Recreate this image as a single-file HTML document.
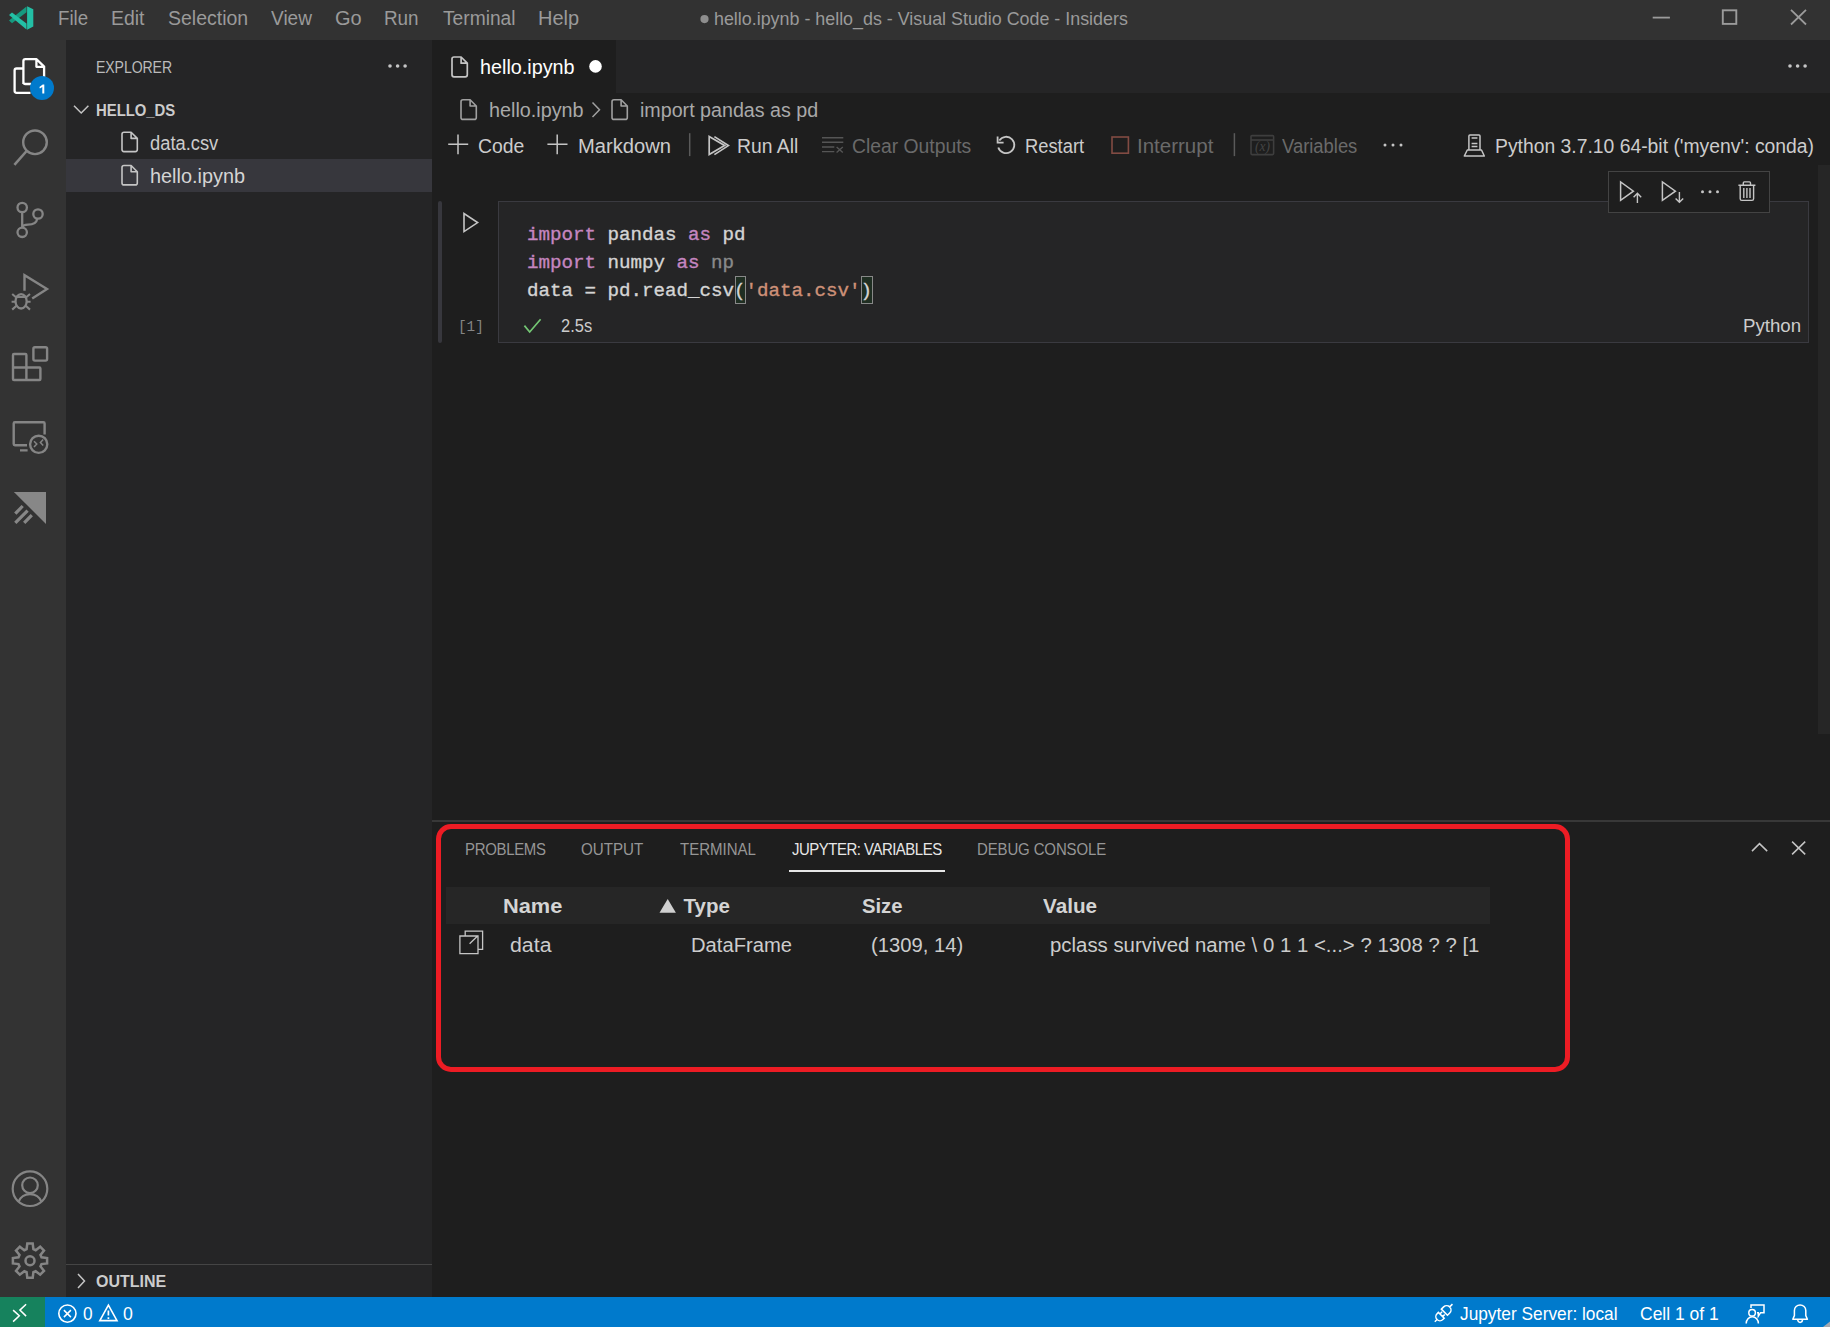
<!DOCTYPE html>
<html><head><meta charset="utf-8"><title>hello.ipynb - hello_ds - Visual Studio Code - Insiders</title>
<style>
html,body{margin:0;padding:0;width:1830px;height:1327px;overflow:hidden;background:#1e1e1e;font-family:"Liberation Sans",sans-serif;}
.a{position:absolute;}
.t{position:absolute;white-space:pre;line-height:1em;transform-origin:0 0;}
svg{position:absolute;overflow:visible;}

</style></head>
<body>
<!-- backgrounds -->
<div class="a" style="left:0;top:0;width:1830px;height:40px;background:#323232"></div>
<div class="a" style="left:0;top:40px;width:66px;height:1257px;background:#333333"></div>
<div class="a" style="left:66px;top:40px;width:366px;height:1257px;background:#252526"></div>
<div class="a" style="left:432px;top:40px;width:1398px;height:53px;background:#252526"></div>
<div class="a" style="left:432px;top:40px;width:184px;height:53px;background:#1e1e1e"></div>
<div class="a" style="left:66px;top:159px;width:366px;height:33px;background:#37373d"></div>
<div class="a" style="left:66px;top:1264px;width:366px;height:1px;background:#454545"></div>
<!-- status bar -->
<div class="a" style="left:0;top:1297px;width:1830px;height:30px;background:#007acc"></div>
<div class="a" style="left:0;top:1297px;width:45px;height:30px;background:#16825d"></div>
<!-- editor scrollbar slider -->
<div class="a" style="left:1818px;top:165px;width:12px;height:569px;background:#262626"></div>
<!-- notebook cell -->
<div class="a" style="left:438px;top:201px;width:4px;height:142px;background:#37373d;border-radius:2px"></div>
<div class="a" style="left:498px;top:201px;width:1309px;height:140px;background:#252526;border:1px solid #3a3a40"></div>
<!-- bracket match boxes -->
<div class="a" style="left:735px;top:276px;width:9px;height:26px;border:1px solid #888;background:#1f2e22"></div>
<div class="a" style="left:861px;top:276px;width:10px;height:26px;border:1px solid #888;background:#1f2e22"></div>
<!-- cell toolbar -->
<div class="a" style="left:1608px;top:171px;width:160px;height:40px;background:#1e1e1e;border:1px solid #434343"></div>
<!-- panel -->
<div class="a" style="left:432px;top:820px;width:1398px;height:2px;background:#383838"></div>
<div class="a" style="left:789px;top:870.4px;width:156.2px;height:1.7px;background:#e7e7e7"></div>
<div class="a" style="left:446px;top:887px;width:1044px;height:37px;background:#262626"></div>
<div class="a" style="left:436px;top:824px;width:1124px;height:238px;border:5px solid #ed1c24;border-radius:15px"></div>

<svg class="a" style="left:0;top:0" width="1830" height="1327" viewBox="0 0 1830 1327" stroke-linecap="butt">
<polygon points="27.1,6.2 33.3,9.2 33.3,26.6 27.1,29.7" fill="#23bfa5"/>
<polygon points="26.5,6.5 26.5,12.3 12,23.2 9,20.6" fill="#16997f"/>
<polygon points="9,15 12,12.4 26.5,23.5 26.5,29.5" fill="#23bfa5"/>
<line x1="1652.7" y1="17.6" x2="1669.9" y2="17.6" stroke="#9b9b9b" stroke-width="1.8" />
<rect x="1722.8" y="10.3" width="13.5" height="13.6" rx="0" fill="none" stroke="#9b9b9b" stroke-width="1.9"/>
<path d="M1791,9.9 L1806,24.5 M1806,9.9 L1791,24.5" fill="none" stroke="#9b9b9b" stroke-width="1.8" />
<circle cx="704.5" cy="19.1" r="4.1" fill="#8e8e8e" stroke="none" stroke-width="0"/>
<path d="M23.4,68.5 H16.6 Q14.6,68.5 14.6,70.5 V90.8 Q14.6,92.8 16.6,92.8 H30.5" fill="none" stroke="#ffffff" stroke-width="2.3" />
<path d="M23.4,84 V61 Q23.4,59.2 25.4,59.2 H36.6 L44.1,66.6 V78 M36.4,59.4 V66.8 H44 M23.4,82 Q23.4,84 25.4,84 H31" fill="none" stroke="#ffffff" stroke-width="2.3" stroke-linejoin="round"/>
<circle cx="42" cy="87.9" r="12" fill="#007acc" stroke="none" stroke-width="0"/>
<polygon points="42.7,84.5 44.3,84.5 44.3,93.6 42.3,93.6 42.3,87 39.9,88.5 39.4,86.9" fill="#fff"/>
<circle cx="35" cy="142.3" r="11.8" fill="none" stroke="#858585" stroke-width="2.4"/>
<line x1="26.6" y1="151" x2="14.4" y2="164.8" stroke="#858585" stroke-width="2.6" />
<circle cx="22.2" cy="207.5" r="4.7" fill="none" stroke="#858585" stroke-width="2.3"/>
<circle cx="38" cy="214" r="4.7" fill="none" stroke="#858585" stroke-width="2.3"/>
<circle cx="22.2" cy="232.3" r="4.7" fill="none" stroke="#858585" stroke-width="2.3"/>
<path d="M22.2,212.4 V227.5 M37.2,218.8 C36.5,223.5 32,224.6 28,224.6 C25,224.6 22.6,225.6 22.3,227.6" fill="none" stroke="#858585" stroke-width="2.3" />
<path d="M24.5,290.8 V275.2 L47,289 L32.2,298.5" fill="none" stroke="#858585" stroke-width="2.4" stroke-linejoin="miter"/>
<ellipse cx="21.1" cy="301.3" rx="5.6" ry="7.2" fill="none" stroke="#858585" stroke-width="2.3"/>
<path d="M15.8,297 H26.4 M12.2,294 L16,297.2 M30,294 L26.2,297.2 M11.6,301.8 H15.5 M26.7,301.8 H30.6 M12.2,309.6 L16.4,305.8 M30,309.6 L25.8,305.8" fill="none" stroke="#858585" stroke-width="2.1" />
<rect x="33.4" y="347.2" width="13.7" height="13.4" rx="1.5" fill="none" stroke="#858585" stroke-width="2.4"/>
<path d="M26.4,367.5 V355 Q26.4,354 25.4,354 H14 Q13,354 13,355 V379 Q13,380 14,380 H39.4 Q40.4,380 40.4,379 V368.5 Q40.4,367.5 39.4,367.5 H13 M26.4,367.5 V380" fill="none" stroke="#858585" stroke-width="2.4" />
<path d="M27,445.2 H14.9 Q13.7,445.2 13.7,444 V423.5 Q13.7,422.3 14.9,422.3 H43.4 Q44.6,422.3 44.6,423.5 V434.5 M20,450.4 H27.6" fill="none" stroke="#858585" stroke-width="2.4" />
<circle cx="38.7" cy="444.3" r="8.6" fill="none" stroke="#858585" stroke-width="2.4"/>
<path d="M34,441.2 L36.8,444 L34,447 M43.2,439.6 L40.4,442.5 L43.2,445.4" fill="none" stroke="#858585" stroke-width="1.5" />
<polygon points="13.9,492 46,492 46,523.9" fill="#878787"/>
<path d="M22.7,506 L15.3,513.7 M27.6,510.7 L15.3,522.8 M31.8,515.1 L24.2,522.8" fill="none" stroke="#878787" stroke-width="3.2" />
<circle cx="30" cy="1188.7" r="17.3" fill="none" stroke="#858585" stroke-width="2.2"/>
<circle cx="30" cy="1185.3" r="7.8" fill="none" stroke="#858585" stroke-width="2.2"/>
<path d="M18.6,1201.6 A12,11 0 0 1 41.4,1201.6" fill="none" stroke="#858585" stroke-width="2.2" />
<path d="M26.6,1249.2 L27.3,1243.6 L32.7,1243.6 L33.4,1249.2 L35.7,1250.2 L40.2,1246.7 L44.0,1250.5 L40.5,1255.0 L41.5,1257.3 L47.1,1258.0 L47.1,1263.4 L41.5,1264.1 L40.5,1266.4 L44.0,1270.9 L40.2,1274.7 L35.7,1271.2 L33.4,1272.2 L32.7,1277.8 L27.3,1277.8 L26.6,1272.2 L24.3,1271.2 L19.8,1274.7 L16.0,1270.9 L19.5,1266.4 L18.5,1264.1 L12.9,1263.4 L12.9,1258.0 L18.5,1257.3 L19.5,1255.0 L16.0,1250.5 L19.8,1246.7 L24.3,1250.2 Z" fill="none" stroke="#858585" stroke-width="2.5" stroke-linejoin="miter"/>
<circle cx="30" cy="1260.7" r="4.5" fill="none" stroke="#858585" stroke-width="2.5"/>
<circle cx="390" cy="66" r="1.8" fill="#c5c5c5" stroke="none" stroke-width="0"/>
<circle cx="397.6" cy="66" r="1.8" fill="#c5c5c5" stroke="none" stroke-width="0"/>
<circle cx="405.1" cy="66" r="1.8" fill="#c5c5c5" stroke="none" stroke-width="0"/>
<path d="M74,105.8 L81.2,113 L88.4,105.8" fill="none" stroke="#c5c5c5" stroke-width="1.5" />
<path d="M78,1274 L84.5,1281 L78,1288" fill="none" stroke="#c5c5c5" stroke-width="1.5" />
<path d="M124,132.2 H131.10000000000002 L137.3,138.39999999999998 V149.6 Q137.3,151.6 135.3,151.6 H124 Q122,151.6 122,149.6 V134.2 Q122,132.2 124,132.2 Z M131.10000000000002,132.2 V138.39999999999998 H137.3" fill="none" stroke="#c5c5c5" stroke-width="1.6" stroke-linejoin="round"/>
<path d="M124,165.5 H131.10000000000002 L137.3,171.7 V182.9 Q137.3,184.9 135.3,184.9 H124 Q122,184.9 122,182.9 V167.5 Q122,165.5 124,165.5 Z M131.10000000000002,165.5 V171.7 H137.3" fill="none" stroke="#c5c5c5" stroke-width="1.6" stroke-linejoin="round"/>
<path d="M454,57 H461.1 L467.3,63.2 V74.8 Q467.3,76.8 465.3,76.8 H454 Q452,76.8 452,74.8 V59 Q452,57 454,57 Z M461.1,57 V63.2 H467.3" fill="none" stroke="#c5c5c5" stroke-width="1.7" stroke-linejoin="round"/>
<circle cx="595.5" cy="66.4" r="6.3" fill="#ffffff" stroke="none" stroke-width="0"/>
<circle cx="1790" cy="66" r="1.8" fill="#c5c5c5" stroke="none" stroke-width="0"/>
<circle cx="1797.6" cy="66" r="1.8" fill="#c5c5c5" stroke="none" stroke-width="0"/>
<circle cx="1805.1" cy="66" r="1.8" fill="#c5c5c5" stroke="none" stroke-width="0"/>
<path d="M463,99.8 H470.1 L476.3,106.0 V117.4 Q476.3,119.4 474.3,119.4 H463 Q461,119.4 461,117.4 V101.8 Q461,99.8 463,99.8 Z M470.1,99.8 V106.0 H476.3" fill="none" stroke="#a0a0a0" stroke-width="1.6" stroke-linejoin="round"/>
<path d="M592.5,102.5 L599.5,109.8 L592.5,117" fill="none" stroke="#a0a0a0" stroke-width="1.5" />
<path d="M614,99.8 H621.0999999999999 L627.3,106.0 V117.4 Q627.3,119.4 625.3,119.4 H614 Q612,119.4 612,117.4 V101.8 Q612,99.8 614,99.8 Z M621.0999999999999,99.8 V106.0 H627.3" fill="none" stroke="#a0a0a0" stroke-width="1.6" stroke-linejoin="round"/>
<path d="M448.2,144.2 H468.2 M458,134.5 V154.2" fill="none" stroke="#c5c5c5" stroke-width="1.5" />
<path d="M547.4,144.2 H567.5 M557.2,134.5 V154.2" fill="none" stroke="#c5c5c5" stroke-width="1.5" />
<line x1="689.7" y1="133.2" x2="689.7" y2="156.1" stroke="#5a5a5a" stroke-width="1.5" />
<path d="M709.2,136.6 V154.6 L724.6,145.6 Z M714.4,136.6 L728.4,145.6 L714.4,154.6" fill="none" stroke="#c5c5c5" stroke-width="1.7" stroke-linejoin="miter"/>
<path d="M822,137.8 H843.3 M822,142.3 H843.3 M822,147 H834.3 M822,151.6 H834.3 M836.6,147 L842.8,152.6 M842.8,147 L836.6,152.6" fill="none" stroke="#555555" stroke-width="1.4" />
<path d="M999.3,140.4 A8.2,8.2 0 1 1 998.3,147.5" fill="none" stroke="#c5c5c5" stroke-width="1.8" />
<path d="M997.6,136.4 V142.6 H1003.6" fill="none" stroke="#c5c5c5" stroke-width="1.8" />
<rect x="1112" y="137" width="16.4" height="16.2" rx="0" fill="none" stroke="#824b43" stroke-width="1.6"/>
<line x1="1234.4" y1="133.2" x2="1234.4" y2="156.1" stroke="#5a5a5a" stroke-width="1.5" />
<rect x="1251" y="135.6" width="22.6" height="19" rx="1" fill="none" stroke="#3e3e3e" stroke-width="1.6"/>
<line x1="1251" y1="140" x2="1273.6" y2="140" stroke="#3e3e3e" stroke-width="1.6" />
<circle cx="1385" cy="145" r="1.5" fill="#c5c5c5" stroke="none" stroke-width="0"/>
<circle cx="1393" cy="145" r="1.5" fill="#c5c5c5" stroke="none" stroke-width="0"/>
<circle cx="1401" cy="145" r="1.5" fill="#c5c5c5" stroke="none" stroke-width="0"/>
<path d="M1468.9,150 V136 Q1468.9,135 1469.9,135 H1479 Q1480,135 1480,136 V150 M1467.3,150 H1481.5 L1484.3,156 H1464.3 Z M1471.6,138 H1477.4 M1471.6,146.4 H1477.4 M1471.6,143.6 H1477.4" fill="none" stroke="#c5c5c5" stroke-width="1.5" stroke-linejoin="round"/>
<path d="M464,213.6 V231.6 L477.6,222.6 Z" fill="none" stroke="#c5c5c5" stroke-width="1.6" stroke-linejoin="miter"/>
<path d="M524.4,325.6 L529.7,332 L540.6,319.2" fill="none" stroke="#74c774" stroke-width="1.7" />
<path d="M1620.6,182 V200.4 L1633.4,191.2 Z" fill="none" stroke="#c5c5c5" stroke-width="1.5" />
<path d="M1637.4,202.9 V193.4 M1633.6,197.2 L1637.4,193.2 L1641.2,197.2" fill="none" stroke="#c5c5c5" stroke-width="1.4" />
<path d="M1662.4,182 V200.4 L1675.4,191.2 Z" fill="none" stroke="#c5c5c5" stroke-width="1.5" />
<path d="M1679.4,192 V202 M1675.6,198.4 L1679.4,202.3 L1683.2,198.4" fill="none" stroke="#c5c5c5" stroke-width="1.4" />
<circle cx="1702.5" cy="191.8" r="1.5" fill="#c5c5c5" stroke="none" stroke-width="0"/>
<circle cx="1710" cy="191.8" r="1.5" fill="#c5c5c5" stroke="none" stroke-width="0"/>
<circle cx="1717.5" cy="191.8" r="1.5" fill="#c5c5c5" stroke="none" stroke-width="0"/>
<path d="M1738.4,185.2 H1755.4 M1743.3,185 V182.9 Q1743.3,181.9 1744.3,181.9 H1749.5 Q1750.5,181.9 1750.5,182.9 V185 M1740.2,185.4 V198.8 Q1740.2,200.4 1741.8,200.4 H1752 Q1753.6,200.4 1753.6,198.8 V185.4 M1743.8,188 V198 M1746.9,188 V198 M1750,188 V198" fill="none" stroke="#c5c5c5" stroke-width="1.4" />
<path d="M1752,851.1 L1759.5,843.6 L1767.2,851.1" fill="none" stroke="#c5c5c5" stroke-width="1.5" />
<path d="M1792.1,841.6 L1805.2,854.4 M1805.2,841.6 L1792.1,854.4" fill="none" stroke="#c5c5c5" stroke-width="1.5" />
<polygon points="659.5,912.8 667.7,899 675.9,912.8" fill="#d0d0d0"/>
<path d="M459.9,936 H478 V953.6 H459.9 Z M465.2,936 V931.2 H482.6 V949.4 H478 M469.6,943.8 L477.6,936" fill="none" stroke="#c5c5c5" stroke-width="1.3" />
<path d="M13.1,1310.1 L19.3,1315.8 L13.1,1321.6 M26.1,1304.3 L19.9,1310.1 L26.1,1316.1" fill="none" stroke="#ffffff" stroke-width="1.5" />
<circle cx="67.4" cy="1313.6" r="8.6" fill="none" stroke="#ffffff" stroke-width="1.6"/>
<path d="M63.9,1310.1 L70.9,1317.1 M70.9,1310.1 L63.9,1317.1" fill="none" stroke="#ffffff" stroke-width="1.5" />
<path d="M108.4,1305.2 L117,1320.6 H99.8 Z" fill="none" stroke="#ffffff" stroke-width="1.6" stroke-linejoin="miter"/>
<path d="M108.4,1310.6 V1315.6 M108.4,1317.2 V1318.9" fill="none" stroke="#ffffff" stroke-width="1.7" />
<g transform="translate(1443.7,1312.9) rotate(-45)" fill="none" stroke="#fff" stroke-width="1.5"><path d="M-12.6,0 H-9.4 M-3.4,-4.1 H-5.3 A4.1,4.1 0 0 0 -5.3,4.1 H-3.4 Z M-3.4,-1.9 H-0.4 M-3.4,1.9 H-0.4 M1,-4.3 H4.2 A4.3,4.3 0 0 1 4.2,4.3 H1 Z M8.5,0 H12.4"/></g>
<path d="M1751,1308 V1305 H1764 V1312.7 H1760.6 L1758.3,1316.3 V1312.7 H1757" fill="none" stroke="#ffffff" stroke-width="1.5" />
<circle cx="1752.1" cy="1312.7" r="3.3" fill="none" stroke="#ffffff" stroke-width="1.5"/>
<path d="M1746.2,1323.4 A6.1,6.6 0 0 1 1758.4,1323.4" fill="none" stroke="#ffffff" stroke-width="1.5" />
<path d="M1792.8,1319.2 L1794.4,1315.6 V1310.6 A5.7,5.7 0 0 1 1805.8,1310.6 V1315.6 L1807.4,1319.2 Z M1797.7,1319.6 A2.4,2.8 0 0 0 1802.5,1319.6" fill="none" stroke="#ffffff" stroke-width="1.5" stroke-linejoin="round"/>
<polygon points="1830,1321.5 1830,1327 1823,1327" fill="#a3a9b1"/>
</svg>
<!-- text layer -->
<span class="t" style="left:58.1px;top:8px;font-size:20px;color:#9a9a9a;transform:scaleX(0.9355);">File</span>
<span class="t" style="left:111.0px;top:8px;font-size:20px;color:#9a9a9a;transform:scaleX(0.9706);">Edit</span>
<span class="t" style="left:168.0px;top:8px;font-size:20px;color:#9a9a9a;transform:scaleX(0.9750);">Selection</span>
<span class="t" style="left:271.0px;top:8px;font-size:20px;color:#9a9a9a;transform:scaleX(0.9535);">View</span>
<span class="t" style="left:335.0px;top:8px;font-size:20px;color:#9a9a9a;transform:scaleX(1.0000);">Go</span>
<span class="t" style="left:384.1px;top:8px;font-size:20px;color:#9a9a9a;transform:scaleX(0.9429);">Run</span>
<span class="t" style="left:443.0px;top:8px;font-size:20px;color:#9a9a9a;transform:scaleX(0.9600);">Terminal</span>
<span class="t" style="left:538.0px;top:8px;font-size:20px;color:#9a9a9a;transform:scaleX(1.0000);">Help</span>
<span class="t" style="left:714.3px;top:10px;font-size:18.5px;color:#9a9a9a;transform:scaleX(0.9658);">hello.ipynb - hello_ds - Visual Studio Code - Insiders</span>
<span class="t" style="left:95.9px;top:60px;font-size:16px;letter-spacing:-0.10px;color:#bbbbbb;transform:scaleX(0.8800);">EXPLORER</span>
<span class="t" style="left:96.1px;top:103px;font-size:16px;color:#cccccc;transform:scaleX(0.9286);font-weight:700;">HELLO_DS</span>
<span class="t" style="left:149.8px;top:133px;font-size:20px;color:#cccccc;transform:scaleX(0.9162);">data.csv</span>
<span class="t" style="left:149.7px;top:166px;font-size:20px;color:#d4d4d4;transform:scaleX(0.9936);">hello.ipynb</span>
<span class="t" style="left:96.0px;top:1274px;font-size:16px;color:#cccccc;transform:scaleX(1.0000);font-weight:700;">OUTLINE</span>
<span class="t" style="left:480.0px;top:57px;font-size:20px;color:#ffffff;transform:scaleX(0.9894);">hello.ipynb</span>
<span class="t" style="left:489.0px;top:100px;font-size:20px;color:#a9a9a9;transform:scaleX(0.9894);">hello.ipynb</span>
<span class="t" style="left:640.0px;top:100px;font-size:20px;color:#a9a9a9;transform:scaleX(0.9832);">import pandas as pd</span>
<span class="t" style="left:478.0px;top:136px;font-size:20px;color:#cccccc;transform:scaleX(0.9696);">Code</span>
<span class="t" style="left:577.5px;top:136px;font-size:20px;color:#cccccc;transform:scaleX(1.0078);">Markdown</span>
<span class="t" style="left:737.4px;top:136px;font-size:20px;color:#cccccc;transform:scaleX(0.9672);">Run All</span>
<span class="t" style="left:851.8px;top:136px;font-size:20px;color:#6a6a6a;transform:scaleX(0.9664);">Clear Outputs</span>
<span class="t" style="left:1025.0px;top:136px;font-size:20px;color:#cccccc;transform:scaleX(0.9172);">Restart</span>
<span class="t" style="left:1137.3px;top:136px;font-size:20px;color:#6a6a6a;transform:scaleX(1.0247);">Interrupt</span>
<span class="t" style="left:1282.3px;top:136px;font-size:20px;color:#6a6a6a;transform:scaleX(0.9195);">Variables</span>
<span class="t" style="left:1495.0px;top:136px;font-size:20px;color:#cccccc;transform:scaleX(0.9665);">Python 3.7.10 64-bit (&#x27;myenv&#x27;: conda)</span>
<span class="t" style="left:457.9px;top:320px;font-size:14px;color:#858585;transform:scaleX(1.0250);font-family:'Liberation Mono';">[1]</span>
<span class="t" style="left:560.6px;top:317px;font-size:18px;color:#cccccc;transform:scaleX(0.9152);">2.5s</span>
<span class="t" style="left:1743.0px;top:317px;font-size:18px;color:#cccccc;transform:scaleX(1.0370);">Python</span>
<span class="t" style="left:465.0px;top:841px;font-size:17px;letter-spacing:-0.35px;color:#969696;transform:scaleX(0.8800);">PROBLEMS</span>
<span class="t" style="left:580.6px;top:841px;font-size:17px;color:#969696;transform:scaleX(0.8913);">OUTPUT</span>
<span class="t" style="left:680.0px;top:841px;font-size:17px;color:#969696;transform:scaleX(0.8837);">TERMINAL</span>
<span class="t" style="left:792.0px;top:841px;font-size:17px;letter-spacing:-0.56px;color:#e7e7e7;transform:scaleX(0.8800);">JUPYTER: VARIABLES</span>
<span class="t" style="left:977.1px;top:841px;font-size:17px;letter-spacing:-0.13px;color:#969696;transform:scaleX(0.8800);">DEBUG CONSOLE</span>
<span class="t" style="left:502.5px;top:896px;font-size:20.5px;color:#d4d4d4;transform:scaleX(1.0630);font-weight:700;">Name</span>
<span class="t" style="left:683.5px;top:896px;font-size:20.5px;color:#d4d4d4;transform:scaleX(1.0000);font-weight:700;">Type</span>
<span class="t" style="left:861.5px;top:896px;font-size:20.5px;color:#d4d4d4;transform:scaleX(0.9872);font-weight:700;">Size</span>
<span class="t" style="left:1042.5px;top:896px;font-size:20.5px;color:#d4d4d4;transform:scaleX(1.0094);font-weight:700;">Value</span>
<span class="t" style="left:510.4px;top:935px;font-size:20px;color:#cccccc;transform:scaleX(1.0658);">data</span>
<span class="t" style="left:691.0px;top:935px;font-size:20px;color:#cccccc;transform:scaleX(1.0101);">DataFrame</span>
<span class="t" style="left:871.0px;top:935px;font-size:20px;color:#cccccc;transform:scaleX(1.0112);">(1309, 14)</span>
<span class="t" style="left:1050.0px;top:935px;font-size:20px;color:#cccccc;transform:scaleX(1.0190);">pclass survived name \ 0 1 1 &lt;...&gt; ? 1308 ? ? [1</span>
<span class="t" style="left:82.9px;top:1305px;font-size:18.5px;color:#ffffff;transform:scaleX(0.9333);">0</span>
<span class="t" style="left:123.2px;top:1305px;font-size:18.5px;color:#ffffff;transform:scaleX(0.9556);">0</span>
<span class="t" style="left:1460.0px;top:1305px;font-size:18.5px;color:#ffffff;transform:scaleX(0.9345);">Jupyter Server: local</span>
<span class="t" style="left:1640.1px;top:1305px;font-size:18.5px;color:#ffffff;transform:scaleX(0.9451);">Cell 1 of 1</span>
<span class="t" style="left:1254.5px;top:140px;font-size:14px;color:#444444;transform:scaleX(0.9688);font-family:'Liberation Serif';font-style:italic;">(x)</span>
<div class="t" style="left:527.1px;top:226px;font-size:19.2px;letter-spacing:-0.022px;font-family:'Liberation Mono',monospace;"><span style="color:#c586c0;-webkit-text-stroke:0.35px #c586c0">import</span><span style="color:#d4d4d4;-webkit-text-stroke:0.35px #d4d4d4"> pandas </span><span style="color:#c586c0;-webkit-text-stroke:0.35px #c586c0">as</span><span style="color:#d4d4d4;-webkit-text-stroke:0.35px #d4d4d4"> pd</span></div>
<div class="t" style="left:527.1px;top:254px;font-size:19.2px;letter-spacing:-0.022px;font-family:'Liberation Mono',monospace;"><span style="color:#c586c0;-webkit-text-stroke:0.35px #c586c0">import</span><span style="color:#d4d4d4;-webkit-text-stroke:0.35px #d4d4d4"> numpy </span><span style="color:#c586c0;-webkit-text-stroke:0.35px #c586c0">as</span><span style="color:#8a8a8a;-webkit-text-stroke:0.35px #8a8a8a"> np</span></div>
<div class="t" style="left:527.1px;top:282px;font-size:19.2px;letter-spacing:-0.022px;font-family:'Liberation Mono',monospace;"><span style="color:#d4d4d4;-webkit-text-stroke:0.35px #d4d4d4">data = pd.read_csv(</span><span style="color:#ce9178;-webkit-text-stroke:0.35px #ce9178">'data.csv'</span><span style="color:#d4d4d4;-webkit-text-stroke:0.35px #d4d4d4">)</span></div>
</body></html>
